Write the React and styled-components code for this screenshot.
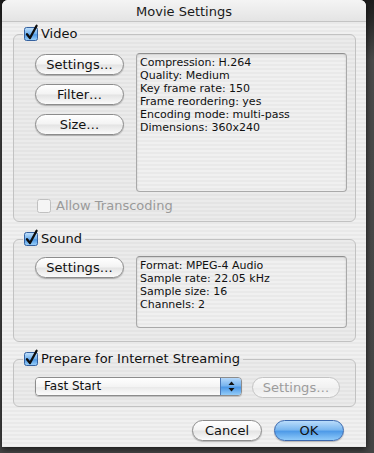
import React from "react";
import styled, { createGlobalStyle } from "styled-components";

const GlobalStyle = createGlobalStyle`
  html, body {
    margin: 0;
    padding: 0;
    background: #3f3f3f;
  }
  body {
    width: 374px;
    height: 453px;
    overflow: hidden;
    font-family: "DejaVu Sans", "Liberation Sans", sans-serif;
  }
`;

const pinstripe = `repeating-linear-gradient(
  to bottom,
  #f0f0f0 0px,
  #f0f0f0 2px,
  #e9e9e9 2px,
  #e9e9e9 4px
)`;

const Page = styled.div`
  width: 374px;
  height: 453px;
  background: linear-gradient(to bottom, #1c1c1c 0px, #2a2a2a 20px, #4a4a4a 60px, #454545 100%);
  padding-left: 2px;
  box-sizing: border-box;
`;

const Window = styled.div`
  width: 364px;
  height: 447px;
  border-radius: 6px 6px 0 0;
  background: ${pinstripe};
  box-shadow: 0 2px 6px rgba(0, 0, 0, 0.7);
  display: flex;
  flex-direction: column;
  overflow: hidden;
`;

const TitleBar = styled.div`
  height: 22px;
  flex: none;
  display: flex;
  align-items: center;
  justify-content: center;
  font-size: 13px;
  color: #1a1a1a;
  background: linear-gradient(to bottom, #f4f4f4, #e4e4e4);
  border-bottom: 1px solid #c4c4c4;
  box-sizing: border-box;
  padding-top: 1px;
`;

const Body = styled.div`
  flex: 1;
  display: flex;
  flex-direction: column;
  padding: 0 10px 9px 11px;
`;

const Group = styled.fieldset`
  margin: ${(p) => p.$top}px 0 0 0;
  padding: 0;
  border: 1px solid #c2c2c2;
  border-radius: 6px;
  background: rgba(0, 0, 0, 0.018);
  min-width: 0;
`;

const GroupInner = styled.div`
  padding: ${(p) => p.$pad};
`;

const Legend = styled.legend`
  margin-left: 9px;
  padding: 0 3px 0 1px;
  height: 14px;
  display: flex;
  align-items: center;
  gap: 3px;
  font-size: 13px;
  color: #111;
  line-height: 14px;
`;

const Row = styled.div`
  display: flex;
  align-items: flex-start;
  gap: ${(p) => p.$gap || 12}px;
`;

const ButtonColumn = styled.div`
  width: 89px;
  flex: none;
  display: flex;
  flex-direction: column;
  gap: 9px;
  padding-top: 1px;
`;

const PillButton = styled.button`
  width: ${(p) => p.$width || 89}px;
  height: 21px;
  flex: none;
  padding: 0;
  border-radius: 11px;
  font-family: "DejaVu Sans", "Liberation Sans", sans-serif;
  font-size: 13px;
  line-height: 19px;
  color: ${(p) => (p.$disabled ? "#9c9c9c" : "#111")};
  border: 1px solid
    ${(p) => (p.$primary ? "#3b68ae" : p.$disabled ? "#c4c4c4" : "#8c8c8c")};
  background: ${(p) =>
    p.$primary
      ? "linear-gradient(to bottom, #b9dcfb 0%, #7cb8f0 45%, #4f9be8 55%, #8fcaf9 100%)"
      : p.$disabled
      ? "linear-gradient(to bottom, #fafafa 0%, #f1f1f1 50%, #ebebeb 51%, #f6f6f6 100%)"
      : "linear-gradient(to bottom, #ffffff 0%, #f3f3f3 48%, #e3e3e3 52%, #fbfbfb 100%)"};
  box-shadow: ${(p) => (p.$disabled ? "none" : "0 1px 1px rgba(0, 0, 0, 0.25)")};
`;

const InfoBox = styled.div`
  flex: 1;
  height: ${(p) => p.$height}px;
  box-sizing: border-box;
  border: 1px solid #a9a9a9;
  border-top-color: #8f8f8f;
  border-radius: 4px;
  background: ${pinstripe};
  box-shadow: inset 0 1px 2px rgba(0, 0, 0, 0.15);
  padding: 2px 3px;
  font-size: 11px;
  line-height: 13px;
  color: #111;
`;

const CheckRow = styled.div`
  display: flex;
  align-items: center;
  gap: 5px;
  margin: 6px 0 0 2px;
  font-size: 13px;
  color: #9a9a9a;
`;

const Popup = styled.div`
  width: 207px;
  height: 19px;
  box-sizing: border-box;
  flex: none;
  display: flex;
  border: 1px solid #8c8c8c;
  border-radius: 4px;
  overflow: hidden;
  box-shadow: 0 1px 1px rgba(0, 0, 0, 0.2);
`;

const PopupLabel = styled.div`
  flex: 1;
  padding-left: 8px;
  font-size: 12px;
  line-height: 17px;
  color: #111;
  background: linear-gradient(to bottom, #ffffff 0%, #f4f4f4 50%, #e8e8e8 51%, #fcfcfc 100%);
`;

const PopupArrows = styled.div`
  width: 20px;
  display: flex;
  align-items: center;
  justify-content: center;
  border-left: 1px solid #4a78b8;
  background: linear-gradient(to bottom, #b5d8fa 0%, #78b4ee 45%, #4d98e6 55%, #93ccf8 100%);
`;

const Footer = styled.div`
  display: flex;
  justify-content: flex-end;
  gap: 12px;
  margin-top: 13px;
  padding-right: 12px;
`;

const CheckBox = ({ checked, disabled }) =>
  disabled ? (
    <svg width="14" height="14" viewBox="0 0 14 14">
      <rect x="0.5" y="0.5" width="13" height="13" rx="2" fill="#f5f5f5" stroke="#c0c0c0" />
    </svg>
  ) : (
    <svg width="14" height="14" viewBox="0 0 14 14" style={{ overflow: "visible" }}>
      <defs>
        <linearGradient id="cbg" x1="0" y1="0" x2="0" y2="1">
          <stop offset="0" stopColor="#c4e2fc" />
          <stop offset="0.5" stopColor="#6fb0ee" />
          <stop offset="0.55" stopColor="#4e98e4" />
          <stop offset="1" stopColor="#9fd3fb" />
        </linearGradient>
      </defs>
      <rect x="0.5" y="0.5" width="13" height="13" rx="2" fill="url(#cbg)" stroke="#35619f" />
      {checked && (
        <path
          d="M3 7.2 L6 11 L12.6 -1.2"
          fill="none"
          stroke="#0d0d0d"
          strokeWidth="2.3"
          strokeLinecap="round"
          strokeLinejoin="round"
        />
      )}
    </svg>
  );

const UpDown = () => (
  <svg width="7" height="11" viewBox="0 0 7 11">
    <path d="M3.5 0.5 L6.5 4 L0.5 4 Z" fill="#111" />
    <path d="M3.5 10.5 L6.5 7 L0.5 7 Z" fill="#111" />
  </svg>
);

const videoInfo = [
  "Compression: H.264",
  "Quality: Medium",
  "Key frame rate: 150",
  "Frame reordering: yes",
  "Encoding mode: multi-pass",
  "Dimensions: 360x240",
];

const soundInfo = [
  "Format: MPEG-4 Audio",
  "Sample rate: 22.05 kHz",
  "Sample size: 16",
  "Channels: 2",
];

export default function App() {
  return (
    <>
      <GlobalStyle />
      <Page>
        <Window>
          <TitleBar>Movie Settings</TitleBar>
          <Body>
            <Group $top={5}>
              <Legend>
                <CheckBox checked />
                Video
              </Legend>
              <GroupInner $pad="12px 8px 8px 21px">
                <Row>
                  <ButtonColumn>
                    <PillButton>Settings…</PillButton>
                    <PillButton>Filter…</PillButton>
                    <PillButton>Size…</PillButton>
                  </ButtonColumn>
                  <InfoBox $height={139}>
                    {videoInfo.map((line) => (
                      <div key={line}>{line}</div>
                    ))}
                  </InfoBox>
                </Row>
                <CheckRow>
                  <CheckBox disabled />
                  Allow Transcoding
                </CheckRow>
              </GroupInner>
            </Group>

            <Group $top={10}>
              <Legend>
                <CheckBox checked />
                Sound
              </Legend>
              <GroupInner $pad="10px 8px 13px 21px">
                <Row>
                  <ButtonColumn>
                    <PillButton>Settings…</PillButton>
                  </ButtonColumn>
                  <InfoBox $height={72}>
                    {soundInfo.map((line) => (
                      <div key={line}>{line}</div>
                    ))}
                  </InfoBox>
                </Row>
              </GroupInner>
            </Group>

            <Group $top={10}>
              <Legend>
                <CheckBox checked />
                Prepare for Internet Streaming
              </Legend>
              <GroupInner $pad="11px 8px 8px 21px">
                <Row $gap={10}>
                  <Popup>
                    <PopupLabel>Fast Start</PopupLabel>
                    <PopupArrows>
                      <UpDown />
                    </PopupArrows>
                  </Popup>
                  <PillButton $disabled $width={88}>
                    Settings…
                  </PillButton>
                </Row>
              </GroupInner>
            </Group>

            <Footer>
              <PillButton $width={70}>Cancel</PillButton>
              <PillButton $primary $width={70}>
                OK
              </PillButton>
            </Footer>
          </Body>
        </Window>
      </Page>
    </>
  );
}
